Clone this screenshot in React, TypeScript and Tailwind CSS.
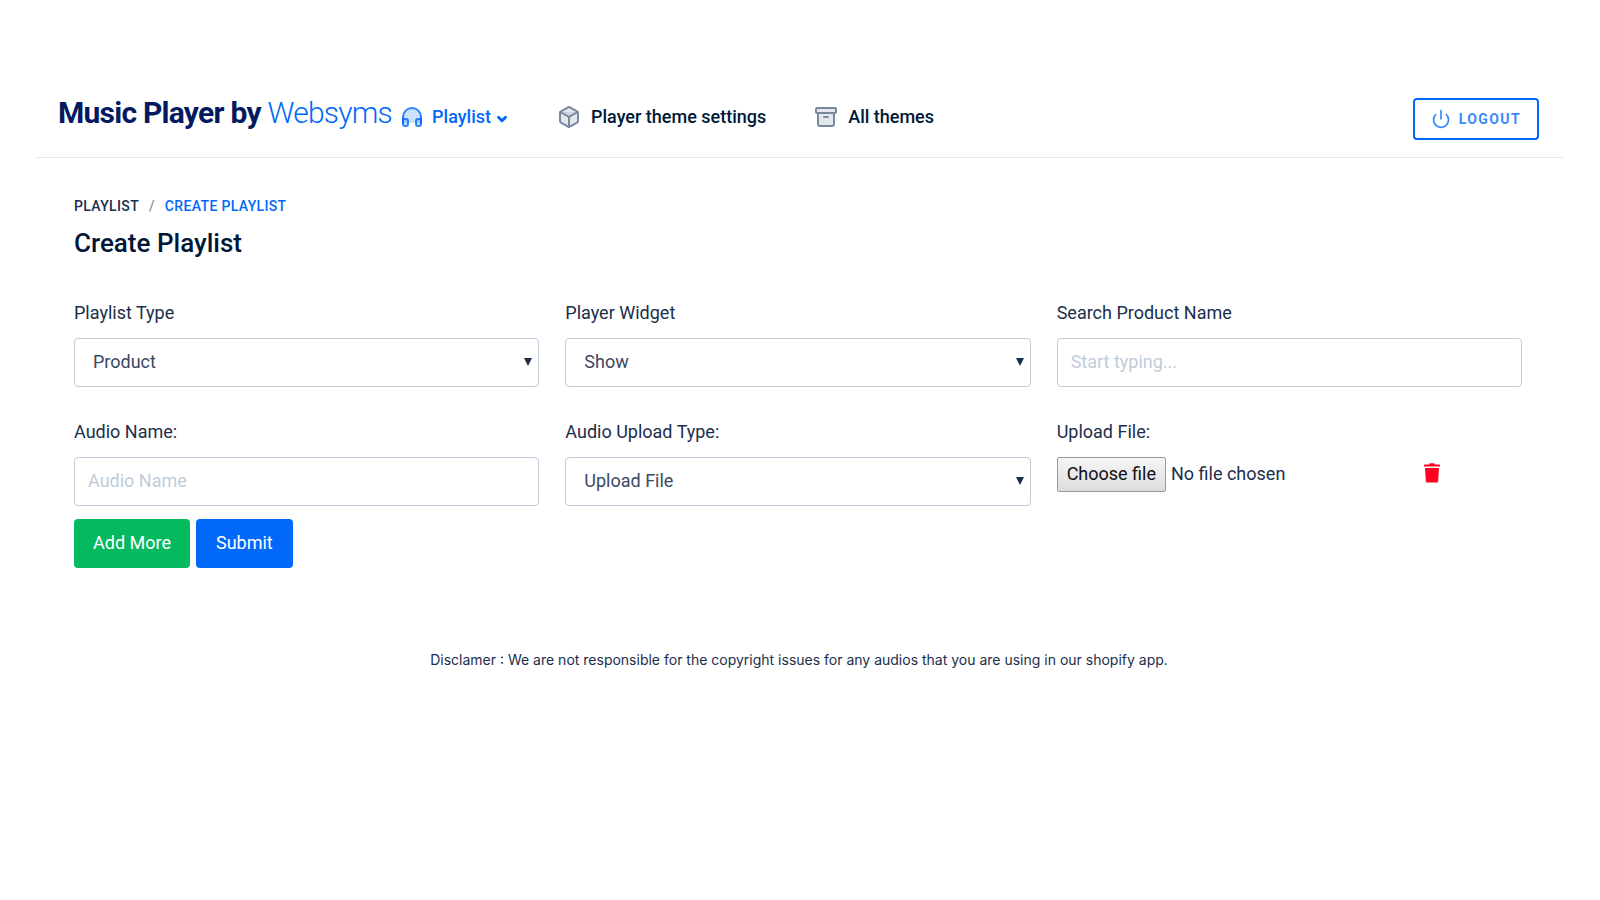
import { useState, type ReactNode } from 'react';
import { Archive, Box, ChevronDown, Power } from 'lucide-react';

const control =
  'block h-[49px] w-full appearance-none rounded border border-[#c0ccda] bg-white pb-0.5 text-lg text-[#3b4863] outline-none focus:border-[#0168fa]';

function Headphones() {
  return (
    <svg
      viewBox="0 0 24 24"
      className="h-6 w-6 fill-[#0168fa]/20 stroke-[#0168fa]/80"
      strokeWidth="2"
      strokeLinecap="round"
      strokeLinejoin="round"
    >
      <path d="M3 18v-6a9 9 0 0 1 18 0v6" />
      <path d="M21 19a2 2 0 0 1-2 2h-1a2 2 0 0 1-2-2v-3a2 2 0 0 1 2-2h3zM3 19a2 2 0 0 0 2 2h1a2 2 0 0 0 2-2v-3a2 2 0 0 0-2-2H3z" />
    </svg>
  );
}

function Trash() {
  return (
    <svg viewBox="0 0 16 20" className="h-5 w-4 fill-current">
      <path d="M0 2.2Q0 1.4.8 1.4H5Q5.4.2 6.4.2h3.2q1 0 1.4 1.2h4.2q.8 0 .8.8v1.4H0z" />
      <path d="M1 5h14l-.8 13.2q-.1 1.4-1.5 1.4H3.3q-1.4 0-1.5-1.4z" />
    </svg>
  );
}

function Field({ id, label, children }: { id: string; label: string; children: ReactNode }) {
  return (
    <div>
      <label htmlFor={id} className="mb-[13px] block text-lg leading-6">
        {label}
      </label>
      {children}
    </div>
  );
}

function Select({ id, options }: { id: string; options: string[] }) {
  return (
    <div className="relative">
      <select id={id} className={`${control} pl-[18px] pr-8`}>
        {options.map((option) => (
          <option key={option}>{option}</option>
        ))}
      </select>
      <svg
        viewBox="0 0 8 8"
        className="pointer-events-none absolute right-[7px] top-5 h-2 w-2 fill-[#1b2e4b]"
      >
        <path d="M0 0h8L4 8z" />
      </svg>
    </div>
  );
}

export default function App() {
  const [fileName, setFileName] = useState('No file chosen');

  return (
    <div className="min-h-screen bg-white pl-[35px] pr-[37px] pt-[78px] font-[Roboto,'Liberation_Sans',sans-serif] text-[#1b2e4b]">
      {/* Header */}
      <header className="flex h-20 items-center border-b border-[#e5e9f2] pl-[23px] pr-6 pt-0.5">
        <a href="#home" className="mb-3 mr-2 whitespace-nowrap text-[30px] font-bold leading-9 tracking-tight text-[#031a61]">
          Music Player by <span className="font-light text-[#0168fa]">Websyms</span>
        </a>
        <nav className="mb-1 flex items-center gap-12 whitespace-nowrap text-lg font-medium text-[#001737]">
          <a href="#playlist" className="flex items-center gap-2 text-[#0168fa]">
            <Headphones />
            <span className="flex items-center gap-1">
              Playlist
              <ChevronDown className="mt-1 h-[14px] w-[14px]" strokeWidth={5} />
            </span>
          </a>
          <a href="#settings" className="flex items-center gap-[10px]">
            <Box className="h-6 w-6 fill-[#7987a1]/20 text-[#7987a1]" strokeWidth={2} />
            Player theme settings
          </a>
          <a href="#themes" className="flex items-center gap-[10px]">
            <Archive className="h-6 w-6 fill-[#7987a1]/20 text-[#7987a1]" strokeWidth={2} />
            All themes
          </a>
        </nav>
        <button
          type="button"
          className="ml-auto flex h-[42px] items-center gap-2 rounded border-2 border-[#0168fa] px-4 text-sm font-bold tracking-widest text-[#0168fa]/80"
        >
          <Power className="h-5 w-5" strokeWidth={2} />
          LOGOUT
        </button>
      </header>

      <main className="pl-[39px] pr-[41px] pt-10">
        <nav aria-label="Breadcrumb" className="flex gap-[10px] text-sm font-medium leading-4 tracking-wide">
          <a href="#playlist" className="text-[#1b2e4b]">PLAYLIST</a>
          <span className="text-[#8392a5]">/</span>
          <a href="#create" className="text-[#0168fa]">CREATE PLAYLIST</a>
        </nav>
        <h1 className="mt-[11px] text-[26px] font-medium leading-9 text-[#001737]">Create Playlist</h1>

        {/* Playlist form */}
        <form className="mt-10" onSubmit={(e) => e.preventDefault()}>
          <div className="grid grid-cols-3 gap-x-[26px] gap-y-[33px]">
            <Field id="type" label="Playlist Type">
              <Select id="type" options={['Product', 'Collection']} />
            </Field>
            <Field id="widget" label="Player Widget">
              <Select id="widget" options={['Show', 'Hide']} />
            </Field>
            <Field id="product" label="Search Product Name">
              <input id="product" placeholder="Start typing..." className={`${control} px-[13px] placeholder:text-[#c0ccda]`} />
            </Field>
            <Field id="audio" label="Audio Name:">
              <input id="audio" placeholder="Audio Name" className={`${control} px-[13px] placeholder:text-[#c0ccda]`} />
            </Field>
            <Field id="upload-type" label="Audio Upload Type:">
              <Select id="upload-type" options={['Upload File', 'Audio URL']} />
            </Field>
            <div>
              <span className="mb-[13px] block text-lg leading-6">Upload File:</span>
              <div className="flex items-center">
                <div className="flex w-[367px] items-center gap-[5px] text-lg">
                  <label
                    htmlFor="file"
                    className="flex h-[35px] items-center whitespace-nowrap rounded-xs border border-[#999] bg-linear-to-b from-[#f6f6f6] to-[#dddddd] px-[9px] pb-0.5 text-[#111]"
                  >
                    Choose file
                  </label>
                  <input
                    id="file"
                    type="file"
                    className="sr-only"
                    onChange={(e) => setFileName(e.target.files?.[0]?.name ?? 'No file chosen')}
                  />
                  <span className="truncate pb-0.5">{fileName}</span>
                </div>
                <button type="button" aria-label="Remove audio" className="pb-1 text-[#ff0022]">
                  <Trash />
                </button>
              </div>
            </div>
          </div>

          <div className="mt-[13px] flex gap-[6px] text-lg text-white">
            <button type="button" className="h-[49px] rounded bg-[#05b95f] px-[19px] pb-0.5">Add More</button>
            <button type="submit" className="h-[49px] rounded bg-[#0168fa] px-5 pb-0.5">Submit</button>
          </div>
        </form>
      </main>

      <footer className="mt-20 text-center font-[Inter,sans-serif] text-sm leading-6">
        Disclamer : We are not responsible for the copyright issues for any audios that you are using in our shopify app.
      </footer>
    </div>
  );
}
